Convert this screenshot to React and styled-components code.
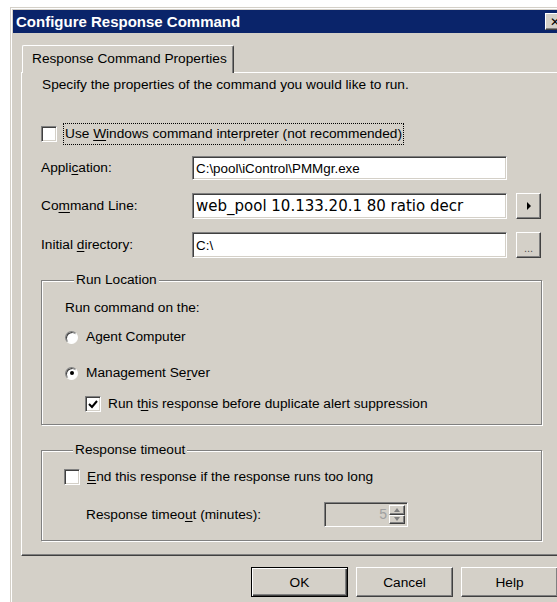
import React from "react";
import styled, { createGlobalStyle, css } from "styled-components";

const GlobalStyle = createGlobalStyle`
  html, body {
    margin: 0;
    padding: 0;
    background: #ffffff;
    overflow: hidden;
  }
  body {
    font-family: "Liberation Sans", Arial, sans-serif;
    font-size: 13.7px;
    color: #000000;
  }
`;

const sunken = css`
  border: 1px solid;
  border-color: #808080 #ffffff #ffffff #808080;
  box-shadow: inset 1px 1px #404040, inset -1px -1px #d4d0c8;
`;

const raised = css`
  border: 1px solid;
  border-color: #ffffff #404040 #404040 #ffffff;
  box-shadow: inset -1px -1px #808080, inset 1px 1px #d4d0c8;
`;

const Page = styled.div`
  width: 557px;
  height: 602px;
  overflow: hidden;
  padding: 7px 0 0 10px;
  box-sizing: border-box;
`;

const Window = styled.div`
  width: 560px;
  height: 620px;
  flex: none;
  box-sizing: border-box;
  background: #d4d0c8;
  border: 1px solid #d4d0c8;
  box-shadow: inset 1px 1px #ffffff;
  padding: 2px;
  display: flex;
  flex-direction: column;
`;

const TitleBar = styled.div`
  height: 23px;
  flex: none;
  background: #0a246a;
  color: #ffffff;
  display: flex;
  align-items: center;
  justify-content: space-between;
  padding: 0 2px 0 3px;
  font-weight: bold;
  font-size: 15px;
`;

const CloseButton = styled.div`
  ${raised};
  width: 20px;
  height: 17px;
  box-sizing: border-box;
  background: #d4d0c8;
  color: #000000;
  font-family: "DejaVu Sans", sans-serif;
  font-weight: bold;
  font-size: 12px;
  display: flex;
  align-items: center;
  justify-content: center;
`;

const Body = styled.div`
  display: flex;
  flex-direction: column;
  padding: 12px 2px 0 8px;
`;

const TabStrip = styled.div`
  display: flex;
  position: relative;
  z-index: 1;
  margin-bottom: -1px;
`;

const Tab = styled.div`
  margin-left: 1px;
  width: 212px;
  height: 28px;
  box-sizing: border-box;
  background: #d4d0c8;
  border-top: 1px solid #ffffff;
  border-left: 1px solid #ffffff;
  border-right: 1px solid #404040;
  border-top-left-radius: 2px;
  border-top-right-radius: 2px;
  box-shadow: inset -1px 0 #808080;
  padding: 5px 0 0 9px;
  line-height: 16px;
`;

const Panel = styled.div`
  border-top: 1px solid #ffffff;
  border-left: 1px solid #ffffff;
  border-right: 1px solid #404040;
  border-bottom: 1px solid #404040;
  box-shadow: inset -1px -1px #808080;
  padding: 0 22px 14px 19px;
  display: flex;
  flex-direction: column;
`;

const Intro = styled.div`
  margin: 4px 0 0 1px;
  line-height: 16px;
`;

const Row = styled.div`
  display: flex;
  align-items: center;
  height: ${(p) => p.$h || 20}px;
  margin-top: ${(p) => p.$mt || 0}px;
  margin-left: ${(p) => p.$ml || 0}px;
  gap: ${(p) => (p.$gap != null ? p.$gap : 7)}px;
  line-height: 16px;
`;

const FormRow = styled.div`
  display: grid;
  grid-template-columns: 142px 315px 25px;
  column-gap: 9px;
  align-items: center;
  height: ${(p) => p.$h}px;
  margin-top: ${(p) => p.$mt}px;
`;

const FieldLabel = styled.span`
  line-height: 16px;
  width: ${(p) => (p.$w ? `${p.$w}px` : "auto")};
  flex: none;
`;

const Key = styled.span`
  text-decoration: underline;
  text-underline-offset: 2px;
`;

const TextBox = styled.div`
  ${sunken};
  height: 100%;
  box-sizing: border-box;
  background: #ffffff;
  display: flex;
  align-items: center;
  padding-left: 3px;
  white-space: nowrap;
  overflow: hidden;
  font-family: ${(p) => (p.$large ? '"DejaVu Sans", Verdana, sans-serif' : "inherit")};
  font-size: ${(p) => (p.$large ? "15px" : "13.4px")};
`;

const SideButton = styled.div`
  ${raised};
  height: 100%;
  box-sizing: border-box;
  background: #d4d0c8;
  display: flex;
  align-items: center;
  justify-content: center;
  color: #555555;
  font-size: 11px;
  padding-top: ${(p) => p.$pt || 0}px;
`;

const CheckBox = styled.span`
  ${sunken};
  width: 16px;
  height: 16px;
  box-sizing: border-box;
  background: #ffffff;
  flex: none;
  display: inline-flex;
  align-items: center;
  justify-content: center;
`;

const Radio = styled.span`
  width: 13px;
  height: 13px;
  flex: none;
  border-radius: 50%;
  box-sizing: border-box;
  background: #ffffff;
  border: 1px solid;
  border-color: #808080 #ffffff #ffffff #808080;
  box-shadow: inset 1px 1px #404040;
  display: inline-flex;
  align-items: center;
  justify-content: center;
  &::after {
    content: "";
    width: 4px;
    height: 4px;
    border-radius: 50%;
    background: ${(p) => (p.$on ? "#000000" : "transparent")};
  }
`;

const FocusLabel = styled.span`
  border: 1px dotted #000000;
  padding: 2px 1px;
  margin-left: -1px;
  line-height: 16px;
`;

const Group = styled.fieldset`
  margin: ${(p) => p.$mt}px 0 0 0;
  padding: 0 0 ${(p) => p.$pb}px ${(p) => p.$pl}px;
  border: 1px solid #808080;
  box-shadow: inset 1px 1px #ffffff, 1px 1px #ffffff;
  display: flex;
  flex-direction: column;
  min-width: 0;
`;

const Legend = styled.legend`
  margin-left: 9px;
  padding: 0 2px;
  line-height: 16px;
  background: #d4d0c8;
  position: relative;
`;

const Spinner = styled.div`
  ${sunken};
  width: 84px;
  height: 25px;
  box-sizing: border-box;
  background: #d4d0c8;
  display: flex;
  align-items: stretch;
  padding: 2px;
`;

const SpinValue = styled.span`
  flex: 1;
  text-align: right;
  padding-right: 2px;
  color: #a0a0a0;
  line-height: 19px;
  font-size: 14px;
`;

const SpinArrows = styled.span`
  width: 16px;
  display: flex;
  flex-direction: column;
`;

const SpinArrow = styled.span`
  ${raised};
  flex: 1;
  box-sizing: border-box;
  background: #d4d0c8;
  display: flex;
  align-items: center;
  justify-content: center;
`;

const ButtonRow = styled.div`
  display: flex;
  justify-content: flex-end;
  gap: 8px;
  margin-top: 11px;
  padding-right: 7px;
`;

const PushButton = styled.div`
  width: 97px;
  height: 30px;
  box-sizing: border-box;
  background: #d4d0c8;
  display: flex;
  align-items: center;
  justify-content: center;
  ${(p) =>
    p.$default
      ? css`
          border: 1px solid #000000;
          box-shadow: inset 1px 1px #ffffff, inset -1px -1px #404040, inset -2px -2px #808080;
        `
      : raised};
`;

const Check = () => (
  <svg width="10" height="9" viewBox="0 0 10 9">
    <path d="M1 4 L4 7 L9 1" fill="none" stroke="#000" strokeWidth="2" />
  </svg>
);

const Tri = ({ dir, color = "#000" }) => {
  const d =
    dir === "right"
      ? "M0 0 L4 4 L0 8 Z"
      : dir === "up"
      ? "M0 4 L3 0 L6 4 Z"
      : "M0 0 L6 0 L3 4 Z";
  const w = dir === "right" ? 4 : 6;
  const h = dir === "right" ? 8 : 4;
  return (
    <svg width={w} height={h} viewBox={`0 0 ${w} ${h}`}>
      <path d={d} fill={color} />
    </svg>
  );
};

export default function App() {
  return (
    <>
      <GlobalStyle />
      <Page>
        <Window>
          <TitleBar>
            <span>Configure Response Command</span>
            <CloseButton>✕</CloseButton>
          </TitleBar>
          <Body>
            <TabStrip>
              <Tab>Response Command Properties</Tab>
            </TabStrip>
            <Panel>
              <Intro>Specify the properties of the command you would like to run.</Intro>

              <Row $h={22} $mt={30} $gap={7}>
                <CheckBox />
                <FocusLabel>
                  Use <Key>W</Key>indows command interpreter (not recommended)
                </FocusLabel>
              </Row>

              <FormRow $h={24} $mt={11}>
                <FieldLabel>
                  Appli<Key>c</Key>ation:
                </FieldLabel>
                <TextBox>C:\pool\iControl\PMMgr.exe</TextBox>
              </FormRow>

              <FormRow $h={26} $mt={13}>
                <FieldLabel>
                  Co<Key>m</Key>mand Line:
                </FieldLabel>
                <TextBox $large>web_pool 10.133.20.1 80 ratio decr</TextBox>
                <SideButton>
                  <Tri dir="right" />
                </SideButton>
              </FormRow>

              <FormRow $h={26} $mt={13}>
                <FieldLabel>
                  Initial <Key>d</Key>irectory:
                </FieldLabel>
                <TextBox>C:\</TextBox>
                <SideButton $pt={6}>...</SideButton>
              </FormRow>

              <Group $mt={14} $pb={10} $pl={23}>
                <Legend>Run Location</Legend>
                <Row $mt={10}>Run command on the:</Row>
                <Row $mt={9} $gap={8}>
                  <Radio />
                  <span>Agent Computer</span>
                </Row>
                <Row $mt={16} $gap={8}>
                  <Radio $on />
                  <span>
                    Management Se<Key>r</Key>ver
                  </span>
                </Row>
                <Row $mt={11} $ml={20} $gap={7}>
                  <CheckBox>
                    <Check />
                  </CheckBox>
                  <span>
                    Run t<Key>h</Key>is response before duplicate alert suppression
                  </span>
                </Row>
              </Group>

              <Group $mt={17} $pb={13} $pl={22}>
                <Legend>Response timeout</Legend>
                <Row $mt={9} $gap={7}>
                  <CheckBox />
                  <span>
                    <Key>E</Key>nd this response if the response runs too long
                  </span>
                </Row>
                <Row $h={25} $mt={15} $ml={22} $gap={0}>
                  <FieldLabel $w={238}>
                    Response timeo<Key>u</Key>t (minutes):
                  </FieldLabel>
                  <Spinner>
                    <SpinValue>5</SpinValue>
                    <SpinArrows>
                      <SpinArrow>
                        <Tri dir="up" color="#808080" />
                      </SpinArrow>
                      <SpinArrow>
                        <Tri dir="down" color="#808080" />
                      </SpinArrow>
                    </SpinArrows>
                  </Spinner>
                </Row>
              </Group>
            </Panel>

            <ButtonRow>
              <PushButton $default>OK</PushButton>
              <PushButton>Cancel</PushButton>
              <PushButton>Help</PushButton>
            </ButtonRow>
          </Body>
        </Window>
      </Page>
    </>
  );
}
